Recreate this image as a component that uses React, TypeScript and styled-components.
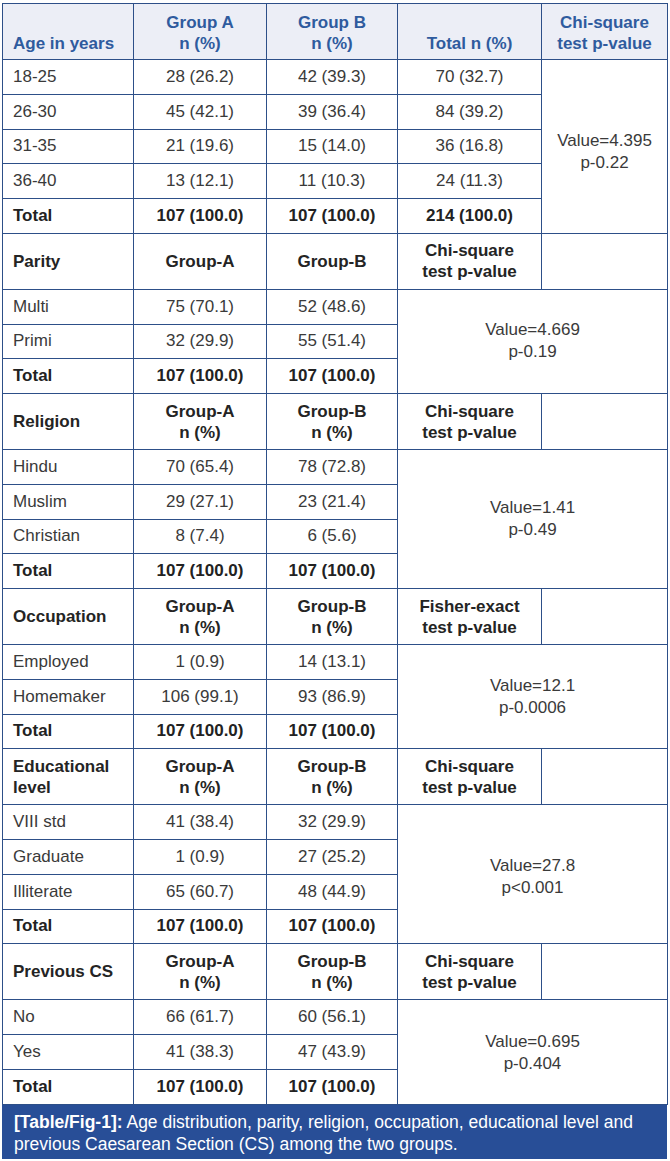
import React from "react";
import styled, { createGlobalStyle } from "styled-components";

const Global = createGlobalStyle`
  html, body { margin: 0; padding: 0; background: #ffffff; }
  body { font-family: "Liberation Sans", Arial, sans-serif; }
`;

const BORDER = "#2d4f88";

const Figure = styled.div`
  width: 665px;
  margin: 3px 0 0 2px;
`;

const Table = styled.table`
  width: 665px;
  border-collapse: collapse;
  table-layout: fixed;
  font-size: 17px;
  color: #3a3a3a;
`;

const Row = styled.tr<{ $kind: "top" | "sub" | "data" }>`
  height: ${(p) => (p.$kind === "data" ? "34.75px" : "56px")};
  background: ${(p) => (p.$kind === "top" ? "#eceef6" : "#ffffff")};
`;

const Head = styled.th<{ $top?: boolean; $left?: boolean }>`
  border: 1px solid ${BORDER};
  padding: ${(p) => (p.$top ? "0 8px 5px" : "0 8px")};
  vertical-align: ${(p) => (p.$top ? "bottom" : "middle")};
  text-align: ${(p) => (p.$left ? "left" : "center")};
  padding-left: ${(p) => (p.$left ? "10px" : "8px")};
  font-weight: 700;
  line-height: 21px;
  color: ${(p) => (p.$top ? "#2f5b9e" : "#242424")};
  white-space: pre-line;
`;

const Cell = styled.td<{ $left?: boolean; $bold?: boolean }>`
  border: 1px solid ${BORDER};
  padding: 0 8px 0 ${(p) => (p.$left ? "10px" : "8px")};
  text-align: ${(p) => (p.$left ? "left" : "center")};
  vertical-align: middle;
  font-weight: ${(p) => (p.$bold ? 700 : 400)};
  color: ${(p) => (p.$bold ? "#222222" : "#3a3a3a")};
  line-height: 20px;
`;

const ValueCell = styled.td<{ $shift?: number }>`
  border: 1px solid ${BORDER};
  text-align: center;
  vertical-align: middle;
  line-height: 22px;
  padding: ${(p) => `${p.$shift ?? 0}px 4px 0`};
  color: #3a3a3a;
  white-space: pre-line;
`;

const Caption = styled.div`
  background: #284e97;
  color: #ffffff;
  font-size: 17.5px;
  line-height: 22px;
  padding: 6px 10px 5px 12px;
  height: 54px;
  box-sizing: border-box;
`;

const CaptionLabel = styled.span`
  font-weight: 700;
`;

type Sub = {
  label: string;
  a: string;
  b: string;
  test: string;
  value: string;
  shift?: number;
  rows: [string, string, string][];
};

const ageRows: [string, string, string, string][] = [
  ["18-25", "28 (26.2)", "42 (39.3)", "70 (32.7)"],
  ["26-30", "45 (42.1)", "39 (36.4)", "84 (39.2)"],
  ["31-35", "21 (19.6)", "15 (14.0)", "36 (16.8)"],
  ["36-40", "13 (12.1)", "11 (10.3)", "24 (11.3)"],
];

const subs: Sub[] = [
  {
    label: "Parity",
    a: "Group-A",
    b: "Group-B",
    test: "Chi-square\ntest p-value",
    value: "Value=4.669\np-0.19",
    rows: [
      ["Multi", "75 (70.1)", "52 (48.6)"],
      ["Primi", "32 (29.9)", "55 (51.4)"],
    ],
  },
  {
    label: "Religion",
    a: "Group-A\nn (%)",
    b: "Group-B\nn (%)",
    test: "Chi-square\ntest p-value",
    value: "Value=1.41\np-0.49",
    rows: [
      ["Hindu", "70 (65.4)", "78 (72.8)"],
      ["Muslim", "29 (27.1)", "23 (21.4)"],
      ["Christian", "8 (7.4)", "6 (5.6)"],
    ],
  },
  {
    label: "Occupation",
    a: "Group-A\nn (%)",
    b: "Group-B\nn (%)",
    test: "Fisher-exact\ntest p-value",
    value: "Value=12.1\np-0.0006",
    rows: [
      ["Employed", "1 (0.9)", "14 (13.1)"],
      ["Homemaker", "106 (99.1)", "93 (86.9)"],
    ],
  },
  {
    label: "Educational\nlevel",
    a: "Group-A\nn (%)",
    b: "Group-B\nn (%)",
    test: "Chi-square\ntest p-value",
    value: "Value=27.8\np<0.001",
    shift: 6,
    rows: [
      ["VIII std", "41 (38.4)", "32 (29.9)"],
      ["Graduate", "1 (0.9)", "27 (25.2)"],
      ["Illiterate", "65 (60.7)", "48 (44.9)"],
    ],
  },
  {
    label: "Previous CS",
    a: "Group-A\nn (%)",
    b: "Group-B\nn (%)",
    test: "Chi-square\ntest p-value",
    value: "Value=0.695\np-0.404",
    shift: 3,
    rows: [
      ["No", "66 (61.7)", "60 (56.1)"],
      ["Yes", "41 (38.3)", "47 (43.9)"],
    ],
  },
];

function SubSection({ s }: { s: Sub }) {
  const span = s.rows.length + 1;
  return (
    <>
      <Row $kind="sub">
        <Head $left>{s.label}</Head>
        <Head>{s.a}</Head>
        <Head>{s.b}</Head>
        <Head>{s.test}</Head>
        <Head />
      </Row>
      {s.rows.map((r, i) => (
        <Row $kind="data" key={r[0]}>
          <Cell $left>{r[0]}</Cell>
          <Cell>{r[1]}</Cell>
          <Cell>{r[2]}</Cell>
          {i === 0 && (
            <ValueCell colSpan={2} rowSpan={span} $shift={s.shift}>
              {s.value}
            </ValueCell>
          )}
        </Row>
      ))}
      <Row $kind="data">
        <Cell $left $bold>Total</Cell>
        <Cell $bold>107 (100.0)</Cell>
        <Cell $bold>107 (100.0)</Cell>
      </Row>
    </>
  );
}

export default function App() {
  return (
    <>
      <Global />
      <Figure>
        <Table>
          <colgroup>
            <col style={{ width: 131 }} />
            <col style={{ width: 133 }} />
            <col style={{ width: 131 }} />
            <col style={{ width: 144 }} />
            <col style={{ width: 126 }} />
          </colgroup>
          <tbody>
            <Row $kind="top">
              <Head $top $left>Age in years</Head>
              <Head $top>{"Group A\nn (%)"}</Head>
              <Head $top>{"Group B\nn (%)"}</Head>
              <Head $top>Total n (%)</Head>
              <Head $top>{"Chi-square\ntest p-value"}</Head>
            </Row>
            {ageRows.map((r, i) => (
              <Row $kind="data" key={r[0]}>
                <Cell $left>{r[0]}</Cell>
                <Cell>{r[1]}</Cell>
                <Cell>{r[2]}</Cell>
                <Cell>{r[3]}</Cell>
                {i === 0 && (
                  <ValueCell rowSpan={5} $shift={12}>
                    {"Value=4.395\np-0.22"}
                  </ValueCell>
                )}
              </Row>
            ))}
            <Row $kind="data">
              <Cell $left $bold>Total</Cell>
              <Cell $bold>107 (100.0)</Cell>
              <Cell $bold>107 (100.0)</Cell>
              <Cell $bold>214 (100.0)</Cell>
            </Row>
            {subs.map((s) => (
              <SubSection key={s.label} s={s} />
            ))}
          </tbody>
        </Table>
        <Caption>
          <CaptionLabel>[Table/Fig-1]:</CaptionLabel> Age distribution, parity,
          religion, occupation, educational level and previous Caesarean
          Section (CS) among the two groups.
        </Caption>
      </Figure>
    </>
  );
}
